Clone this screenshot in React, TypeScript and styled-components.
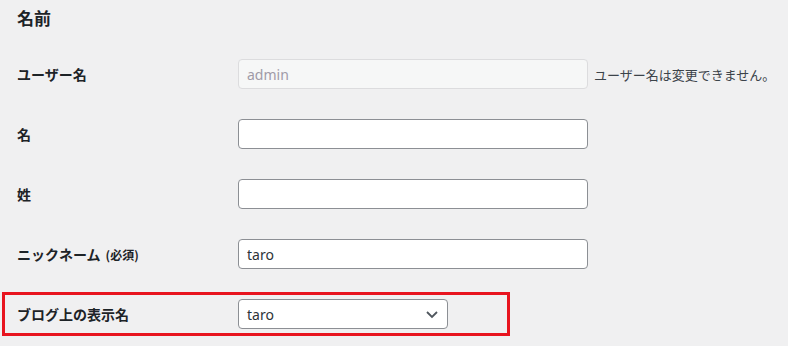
import React from "react";
import styled, { createGlobalStyle } from "styled-components";

const Global = createGlobalStyle`
  html, body { margin: 0; padding: 0; background: #f0f0f1; }
  body {
    font-family: "Noto Sans", "Noto Sans CJK JP", sans-serif;
    color: #1d2327;
    font-size: 13px;
  }
`;

const Page = styled.div`
  width: 788px;
  height: 346px;
  overflow: hidden;
  background: #f0f0f1;
`;

const Heading = styled.h2`
  margin: 0;
  height: 44px;
  box-sizing: border-box;
  padding: 6px 0 0 17px;
  font-size: 17px;
  line-height: 24px;
  font-weight: 700;
  color: #1d2327;
  font-family: "Noto Sans CJK JP", sans-serif;
`;

const Row = styled.div<{ $highlight?: boolean }>`
  display: flex;
  align-items: center;
  box-sizing: border-box;
  ${(p) =>
    p.$highlight
      ? `
    height: 44px;
    width: 508px;
    margin: 8px 0 0 2px;
    padding-left: 12px;
    border: 3px solid #e8141f;
  `
      : `
    height: 60px;
    padding-left: 17px;
  `}
`;

const Label = styled.label`
  width: 221px;
  flex: none;
  font-size: 14px;
  font-weight: 700;
  color: #1d2327;
  font-family: "Noto Sans CJK JP", sans-serif;
  white-space: nowrap;
`;

const Small = styled.span`
  font-size: 12px;
  font-weight: 700;
  margin-left: 5px;
`;

const TextInput = styled.input`
  box-sizing: border-box;
  width: 350px;
  height: 30px;
  margin: 0;
  padding: 0 8px;
  border: 1px solid #8c8f94;
  border-radius: 4px;
  background: #fff;
  color: #2c3338;
  font-family: "Noto Sans", "Noto Sans CJK JP", sans-serif;
  font-size: 14px;
  outline: none;
  &:disabled {
    background: #f6f7f7;
    border-color: #dcdcde;
    color: #a09ba7;
  }
`;

const Note = styled.span`
  margin-left: 6px;
  font-size: 13px;
  color: #3c434a;
  font-family: "Noto Sans CJK JP", sans-serif;
  white-space: nowrap;
`;

const SelectBox = styled.div`
  box-sizing: border-box;
  width: 210px;
  height: 30px;
  display: flex;
  align-items: center;
  justify-content: space-between;
  padding: 0 8px 0 8px;
  border: 1px solid #8c8f94;
  border-radius: 4px;
  background: #fff;
  color: #2c3338;
  font-family: "Noto Sans", sans-serif;
  font-size: 14px;
`;

const Chevron = () => (
  <svg width="14" height="14" viewBox="0 0 14 14">
    <path d="M2 5l5 5 5-5" fill="none" stroke="#50575e" strokeWidth="1.8" />
  </svg>
);

export default function App() {
  return (
    <Page>
      <Global />
      <Heading>名前</Heading>
      <Row>
        <Label>ユーザー名</Label>
        <TextInput disabled value="admin" readOnly />
        <Note>ユーザー名は変更できません。</Note>
      </Row>
      <Row>
        <Label>名</Label>
        <TextInput defaultValue="" />
      </Row>
      <Row>
        <Label>姓</Label>
        <TextInput defaultValue="" />
      </Row>
      <Row>
        <Label>
          ニックネーム<Small>(必須)</Small>
        </Label>
        <TextInput defaultValue="taro" />
      </Row>
      <Row $highlight>
        <Label>ブログ上の表示名</Label>
        <SelectBox>
          <span>taro</span>
          <Chevron />
        </SelectBox>
      </Row>
    </Page>
  );
}
